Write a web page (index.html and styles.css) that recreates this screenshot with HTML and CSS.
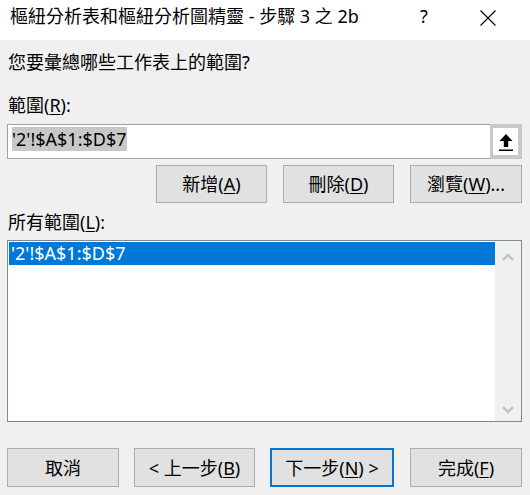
FILE: index.html
```html
<!DOCTYPE html>
<html lang="zh-Hant">
<head>
<meta charset="utf-8">
<link rel="stylesheet" href="styles.css">
</head>
<body>
<div class="dialog">
  <div class="titlebar">
    <div class="title">樞紐分析表和樞紐分析圖精靈 - 步驟 3 之 2b</div>
    <div class="help">?</div>
    <svg class="close" width="16" height="16" viewBox="0 0 16 16"><path d="M0.5 0.5 L15.5 15.5 M15.5 0.5 L0.5 15.5" stroke="#000" stroke-width="1.1" fill="none"/></svg>
  </div>
  <div class="content">
    <div class="prompt">您要彙總哪些工作表上的範圍?</div>
    <div class="label range-label">範圍(<u>R</u>):</div>
    <div class="rangebox">
      <div class="rangetext"><span class="sel">'2'!$A$1:$D$7</span></div>
      <div class="collapse">
        <div class="collapse-inner">
          <svg width="16" height="20" viewBox="0 0 16 20"><path d="M8 2 L14.5 9 L10.2 9 L10.2 15 L5.8 15 L5.8 9 L1.5 9 Z" fill="#000"/><rect x="1" y="17.5" width="14" height="1.5" fill="#000"/></svg>
        </div>
      </div>
    </div>
    <div class="row top-buttons">
      <button class="btn w111">新增(<u>A</u>)</button>
      <button class="btn w111">刪除(<u>D</u>)</button>
      <button class="btn w112">瀏覽(<u>W</u>)...</button>
    </div>
    <div class="label list-label">所有範圍(<u>L</u>):</div>
    <div class="listbox">
      <div class="items">
        <div class="item selected">'2'!$A$1:$D$7</div>
      </div>
      <div class="scrollbar">
        <svg class="chev" width="12" height="8" viewBox="0 0 12 8"><path d="M1 7 L6 2 L11 7" stroke="#c1c1c1" stroke-width="2.4" fill="none"/></svg>
        <svg class="chev" width="12" height="8" viewBox="0 0 12 8"><path d="M1 1 L6 6 L11 1" stroke="#c1c1c1" stroke-width="2.4" fill="none"/></svg>
      </div>
    </div>
    <div class="row bottom-buttons">
      <button class="btn b-cancel">取消</button>
      <button class="btn b-back">&lt; 上一步(<u>B</u>)</button>
      <button class="btn b-next default">下一步(<u>N</u>) &gt;</button>
      <button class="btn b-finish">完成(<u>F</u>)</button>
    </div>
  </div>
</div>
</body>
</html>
```
FILE: styles.css
```css
* { box-sizing: border-box; }
html, body {
  margin: 0;
  padding: 0;
  background: #f0f0f0;
}
body {
  width: 530px;
  height: 495px;
  overflow: hidden;
  font-family: "Noto Sans", "Noto Sans CJK TC", sans-serif;
  font-size: 18px;
  line-height: 24px;
  color: #000;
}
u { text-decoration: underline; text-underline-offset: 2px; text-decoration-thickness: 1px; }
.titlebar {
  height: 40px;
  background: #fff;
  display: flex;
  align-items: flex-start;
  padding-top: 4px;
}
.title {
  padding-left: 10px;
  width: 416px;
  color: #000;
}
.help {
  width: 64px;
  padding-left: 4px;
}
.close {
  margin-top: 6px;
}
.content {
  padding: 0 8px 0 7px;
}
.prompt {
  margin-top: 10px;
  padding-left: 1px;
}
.label { padding-left: 1px; }
.range-label { margin-top: 19px; }
.rangebox {
  margin-top: 7px;
  height: 35px;
  border: 1px solid #a0a0a0;
  background: #fff;
  display: flex;
}
.rangetext {
  flex: 1;
  padding: 2px 0 0 4px;
}
.sel {
  background: #c8c8c8;
  display: inline-block;
  height: 24px;
  padding-right: 1px;
}
.collapse {
  width: 32px;
  margin: -1px -1px -1px 0;
  border: 4px solid #c8c8c8;
  border-left-width: 3px;
  background: #fff;
  display: flex;
  align-items: center;
  justify-content: center;
}
.collapse-inner { display: flex; }
.row { display: flex; }
.top-buttons {
  margin-top: 6px;
  justify-content: flex-end;
  gap: 16px;
}
.btn {
  font: inherit;
  color: #000;
  height: 38px;
  background: #e1e1e1;
  border: 1px solid #adadad;
  padding: 0;
  margin: 0;
}
.w111 { width: 111px; }
.w112 { width: 112px; }
.list-label { margin-top: 7px; }
.listbox {
  margin-top: 6px;
  height: 182px;
  border: 1px solid #828790;
  background: #fff;
  display: flex;
  padding: 1px;
}
.items { flex: 1; }
.item {
  height: 23px;
  line-height: 23px;
  padding-left: 2px;
}
.selected {
  background: #0078d7;
  color: #fff;
}
.scrollbar {
  width: 26px;
  margin: -1px -1px -1px 0;
  background: #f0f0f0;
  display: flex;
  flex-direction: column;
  justify-content: space-between;
  align-items: center;
  padding: 12px 0 7px;
}
.bottom-buttons {
  margin-top: 26px;
}
.bottom-buttons .btn { height: 39px; }
.b-cancel { width: 112px; }
.b-back { width: 121px; margin-left: 15px; }
.b-next { width: 124px; margin-left: 15px; }
.b-finish { width: 112px; margin-left: 16px; }
.default { border: 2px solid #0078d7; }
```
